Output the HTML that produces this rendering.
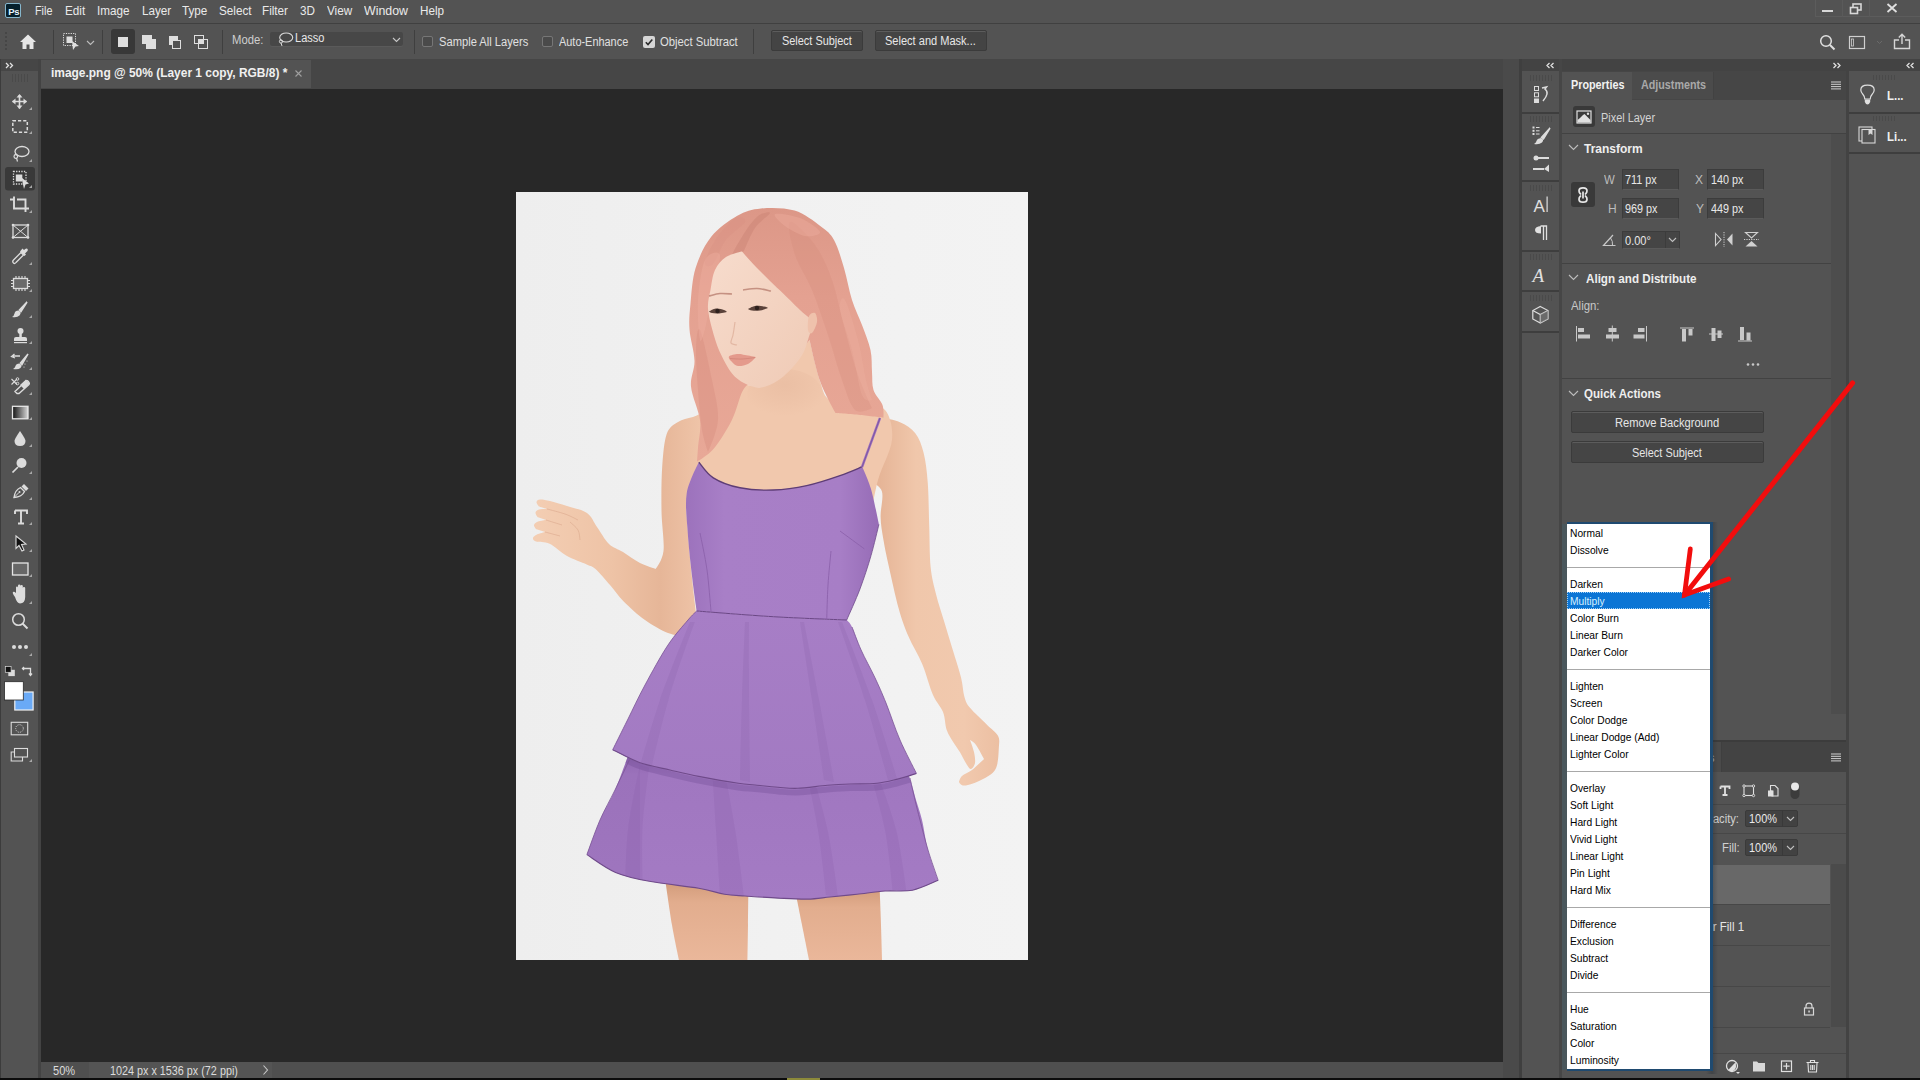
<!DOCTYPE html>
<html><head><meta charset="utf-8">
<style>
*{box-sizing:border-box}
html,body{margin:0;padding:0}
body{width:1920px;height:1080px;overflow:hidden;position:relative;background:#535353;font-family:"Liberation Sans",sans-serif;color:#e6e6e6}
.a{position:absolute}
.t{position:absolute;white-space:nowrap;transform-origin:0 50%;line-height:1}
.mi{position:absolute;top:3px;font-size:13px;color:#eaeaea;white-space:nowrap;line-height:15px;transform-origin:0 50%}
.ob{font-size:12px;color:#e0e0e0}
.cb{position:absolute;width:11px;height:11px;border:1px solid #767676;border-radius:2px;background:#4a4a4a}
.btn{position:absolute;background:#444;border:1px solid #3b3b3b;border-radius:2px;box-shadow:0 1px 0 #5c5c5c inset}
.sep{position:absolute;width:1px;background:#3f3f3f}
.ico{position:absolute;overflow:visible}
.grip{position:absolute;height:8px;background:repeating-linear-gradient(90deg,#4b4b4b 0 1px,transparent 1px 3px)}
.dd div{position:absolute;left:4px;font-size:12px;color:#1a1a1a;white-space:nowrap;transform:scaleX(.9);transform-origin:0 50%;line-height:14px}
.ddi{position:absolute;left:3px;margin-top:.8px;font-size:11px;line-height:17px;height:17px;color:#000;white-space:nowrap;transform:scaleX(.93);transform-origin:0 50%}
</style></head>
<body>
<!-- window border left -->
<!-- MENU BAR -->
<div class="a" style="left:0;top:0;width:1920px;height:23px;background:#535353"></div>
<div class="a" style="left:0;top:23px;width:1920px;height:1px;background:#404040"></div>
<!-- Ps logo -->
<div class="a" style="left:5px;top:3px;width:16px;height:15px;background:#06202c;border:1px solid #86b6cc;border-radius:2px"></div>
<div class="a" style="left:8.3px;top:5.8px;font-size:9.5px;font-weight:700;color:#e8f6ff;line-height:11px;letter-spacing:-.4px">Ps</div>
<div class="mi" style="left:35px;transform:scaleX(.83)">File</div>
<div class="mi" style="left:65px;transform:scaleX(.9)">Edit</div>
<div class="mi" style="left:97px;transform:scaleX(.9)">Image</div>
<div class="mi" style="left:142px;transform:scaleX(.9)">Layer</div>
<div class="mi" style="left:182px;transform:scaleX(.9)">Type</div>
<div class="mi" style="left:219px;transform:scaleX(.9)">Select</div>
<div class="mi" style="left:262px;transform:scaleX(.9)">Filter</div>
<div class="mi" style="left:300px;transform:scaleX(.9)">3D</div>
<div class="mi" style="left:327px;transform:scaleX(.9)">View</div>
<div class="mi" style="left:364px;transform:scaleX(.95)">Window</div>
<div class="mi" style="left:420px;transform:scaleX(.9)">Help</div>

<!-- OPTIONS BAR -->
<div class="a" style="left:0;top:24px;width:1920px;height:35px;background:#535353"></div>


<!-- OPTIONS BAR CONTENT -->
<div class="grip" style="left:5px;top:32px;width:2px;height:19px;background:repeating-linear-gradient(180deg,#464646 0 2px,transparent 2px 4px)"></div>
<svg class="ico" style="left:19px;top:33px" width="18" height="17" viewBox="0 0 18 17"><path d="M9,1.5 L17,9 L14.5,9 L14.5,16 L10.5,16 L10.5,11.5 L7.5,11.5 L7.5,16 L3.5,16 L3.5,9 L1,9 Z" fill="#e6e6e6"/></svg>
<div class="sep" style="left:53px;top:30px;height:24px"></div>
<svg class="ico" style="left:62px;top:32px" width="20" height="19" viewBox="0 0 20 19"><rect x="1.5" y="1.5" width="12" height="12" fill="none" stroke="#e0e0e0" stroke-width="1" stroke-dasharray="1.2 1.2"/><rect x="4.5" y="4.5" width="6" height="6.5" fill="#e0e0e0"/><path d="M10,9 L17,14 L13.5,14.5 L11,18 Z" fill="#e0e0e0"/></svg>
<svg class="ico" style="left:86px;top:40px" width="9" height="6" viewBox="0 0 9 6"><path d="M1,1 L4.5,4.5 L8,1" fill="none" stroke="#bdbdbd" stroke-width="1.1"/></svg>
<div class="sep" style="left:102px;top:30px;height:24px"></div>
<div class="a" style="left:111px;top:29px;width:24px;height:25px;background:#383838;border-radius:3px"></div>
<div class="a" style="left:118px;top:37px;width:10px;height:10px;background:#dedede"></div>
<div class="a" style="left:142px;top:35px;width:10px;height:9px;background:#dedede"></div>
<div class="a" style="left:146px;top:39px;width:10px;height:10px;background:#dedede"></div>
<div class="a" style="left:169px;top:36px;width:9px;height:9px;background:#dedede"></div>
<div class="a" style="left:172px;top:40px;width:9px;height:9px;border:1.2px solid #dedede;background:#535353"></div>
<div class="a" style="left:194px;top:35px;width:10px;height:9px;border:1.2px solid #dedede"></div>
<div class="a" style="left:198px;top:39px;width:10px;height:10px;border:1.2px solid #dedede"></div>
<div class="a" style="left:198px;top:39px;width:6px;height:5px;background:#dedede"></div>
<div class="sep" style="left:222px;top:30px;height:24px"></div>
<div class="t ob" style="left:232px;top:34px;font-size:12px;transform:scaleX(.94);color:#cfcfcf">Mode:</div>
<div class="a" style="left:270px;top:32px;width:133px;height:14px;background:#474747;border-radius:2px;box-shadow:0 1px 0 #5a5a5a"></div>
<svg class="ico" style="left:277px;top:32px" width="17" height="15" viewBox="0 0 17 15"><ellipse cx="9.2" cy="5.5" rx="6.5" ry="4.5" fill="none" stroke="#dcdcdc" stroke-width="1.1"/><circle cx="4" cy="9.5" r="1.6" fill="none" stroke="#dcdcdc" stroke-width="1"/><path d="M4,11 L5,14" stroke="#dcdcdc" stroke-width="1"/></svg>
<div class="t ob" style="left:295px;top:32px;font-size:12px;transform:scaleX(.92);color:#e8e8e8">Lasso</div>
<svg class="ico" style="left:392px;top:37px" width="9" height="6" viewBox="0 0 9 6"><path d="M1,1 L4.5,4.5 L8,1" fill="none" stroke="#c8c8c8" stroke-width="1.1"/></svg>
<div class="sep" style="left:414px;top:30px;height:24px"></div>
<div class="cb" style="left:422px;top:36px"></div>
<div class="t ob" style="left:439px;top:36px;font-size:12px;transform:scaleX(.93)">Sample All Layers</div>
<div class="cb" style="left:542px;top:36px"></div>
<div class="t ob" style="left:559px;top:36px;font-size:12px;transform:scaleX(.91)">Auto-Enhance</div>
<div class="a" style="left:643px;top:36px;width:12px;height:12px;background:#d6d6d6;border-radius:2px"></div>
<svg class="ico" style="left:643px;top:36px" width="12" height="12" viewBox="0 0 12 12"><path d="M2.8,6.2 L5,8.5 L9.3,3.5" fill="none" stroke="#2b2b2b" stroke-width="1.6"/></svg>
<div class="t ob" style="left:660px;top:36px;font-size:12px;transform:scaleX(.94)">Object Subtract</div>
<div class="sep" style="left:753px;top:29px;height:25px"></div>
<div class="btn" style="left:771px;top:30px;width:92px;height:21px"></div>
<div class="t ob" style="left:782px;top:35px;font-size:12px;transform:scaleX(.91);color:#e8e8e8">Select Subject</div>
<div class="btn" style="left:875px;top:30px;width:112px;height:21px"></div>
<div class="t ob" style="left:885px;top:35px;font-size:12px;transform:scaleX(.92);color:#e8e8e8">Select and Mask...</div>
<!-- right side of options bar -->
<svg class="ico" style="left:1819px;top:34px" width="17" height="17" viewBox="0 0 17 17"><circle cx="7" cy="7" r="5.3" fill="none" stroke="#e0e0e0" stroke-width="1.5"/><path d="M11,11 L15.5,15.5" stroke="#e0e0e0" stroke-width="2"/></svg>
<svg class="ico" style="left:1848px;top:35px" width="18" height="15" viewBox="0 0 18 15"><rect x="1.5" y="1.5" width="15" height="12" fill="none" stroke="#cfcfcf" stroke-width="1.2"/><rect x="3.5" y="4" width="2" height="7" fill="none" stroke="#cfcfcf" stroke-width=".8"/></svg>
<svg class="ico" style="left:1876px;top:40px" width="7" height="5" viewBox="0 0 7 5"><path d="M1,1 L3.5,3.5 L6,1" fill="none" stroke="#6a6a6a" stroke-width="1"/></svg>
<svg class="ico" style="left:1893px;top:33px" width="18" height="17" viewBox="0 0 18 17"><path d="M6,7 L1.5,7 L1.5,15.5 L16.5,15.5 L16.5,7 L12,7" fill="none" stroke="#d6d6d6" stroke-width="1.4"/><path d="M9,11 L9,1.5 M5.8,4.5 L9,1.3 L12.2,4.5" fill="none" stroke="#d6d6d6" stroke-width="1.4"/></svg>
<!-- window controls -->
<div class="a" style="left:1815px;top:0;width:105px;height:17px;border-left:1px solid #5c5c5c;border-bottom:1px solid #5c5c5c"></div>
<div class="a" style="left:1842px;top:0;width:1px;height:17px;background:#5a5a5a"></div>
<div class="a" style="left:1869px;top:0;width:1px;height:17px;background:#5a5a5a"></div>
<div class="a" style="left:1822px;top:10px;width:11px;height:2px;background:#d8d8d8"></div>
<svg class="ico" style="left:1849px;top:3px" width="14" height="12" viewBox="0 0 14 12"><rect x="4" y="1" width="8" height="6" fill="none" stroke="#d8d8d8" stroke-width="1.6"/><rect x="1.5" y="4.5" width="7" height="6" fill="#535353" stroke="#d8d8d8" stroke-width="1.6"/></svg>
<svg class="ico" style="left:1886px;top:3px" width="12" height="10" viewBox="0 0 12 10"><path d="M1.5,1 L10.5,9 M10.5,1 L1.5,9" stroke="#e0e0e0" stroke-width="1.8"/></svg>

<!-- LEFT TOOLBAR -->
<div class="a" style="left:0;top:59px;width:38px;height:1019px;background:#535353"></div>
<div class="a" style="left:0;top:59px;width:38px;height:12px;background:#464646"></div>
<div class="a" style="left:0;top:59px;width:1px;height:1019px;background:#3c3c3c"></div>
<div class="a" style="left:38px;top:59px;width:3px;height:1019px;background:#434343"></div>
<!-- TAB BAR -->
<div class="a" style="left:41px;top:59px;width:1462px;height:30px;background:#464646"></div>
<div class="a" style="left:41px;top:60px;width:270px;height:28px;background:#535353"></div>
<!-- tab -->
<div class="t" style="left:51px;top:67px;font-size:12px;font-weight:700;color:#f0f0f0;transform:scaleX(.995)">image.png @ 50% (Layer 1 copy, RGB/8) *</div>
<svg class="ico" style="left:294px;top:69px" width="9" height="9" viewBox="0 0 9 9"><path d="M1.5,1.5 L7.5,7.5 M7.5,1.5 L1.5,7.5" stroke="#a0a0a0" stroke-width="1.1"/></svg>
<svg class="ico" style="left:5px;top:62px" width="9" height="7" viewBox="0 0 9 7"><path d="M1,1 L3.5,3.5 L1,6 M5,1 L7.5,3.5 L5,6" fill="none" stroke="#e0e0e0" stroke-width="1.3"/></svg>
<!-- CANVAS -->
<div class="a" style="left:41px;top:89px;width:1462px;height:973px;background:#282828"></div>
<!-- STATUS BAR -->
<div class="a" style="left:41px;top:1062px;width:1462px;height:16px;background:#4f4f4f"></div>
<div class="a" style="left:0;top:1078px;width:1920px;height:2px;background:#0c0c0c"></div>
<!-- canvas vscroll strip -->
<div class="a" style="left:1503px;top:59px;width:16px;height:1019px;background:#4a4a4a"></div>
<div class="a" style="left:1519px;top:59px;width:3px;height:1019px;background:#3f3f3f"></div>
<!-- PANEL ICON COLUMN -->
<div class="a" style="left:1522px;top:59px;width:37px;height:1019px;background:#535353"></div>
<div class="a" style="left:1522px;top:59px;width:37px;height:12px;background:#434343"></div>
<div class="a" style="left:1559px;top:59px;width:3px;height:1019px;background:#464646"></div>
<!-- PROPERTIES PANEL -->
<div class="a" style="left:1562px;top:59px;width:284px;height:1019px;background:#535353"></div>
<div class="a" style="left:1562px;top:59px;width:284px;height:12px;background:#434343"></div>
<div class="a" style="left:1846px;top:59px;width:3px;height:1019px;background:#434343"></div>
<!-- FAR RIGHT PANEL -->
<div class="a" style="left:1849px;top:59px;width:71px;height:1019px;background:#535353"></div>
<div class="a" style="left:1849px;top:59px;width:71px;height:12px;background:#434343"></div>


<!-- PANEL COLUMN CONTENT -->
<svg class="ico" style="left:1545px;top:62px" width="10" height="7" viewBox="0 0 10 7"><path d="M4.5,1 L2,3.5 L4.5,6 M8.5,1 L6,3.5 L8.5,6" fill="none" stroke="#e0e0e0" stroke-width="1.3"/></svg>
<div class="a" style="left:1522px;top:112px;width:37px;height:2px;background:#3e3e3e"></div>
<div class="a" style="left:1522px;top:180px;width:37px;height:2px;background:#3e3e3e"></div>
<div class="a" style="left:1522px;top:250px;width:37px;height:2px;background:#3e3e3e"></div>
<div class="a" style="left:1522px;top:290px;width:37px;height:2px;background:#3e3e3e"></div>
<div class="a" style="left:1522px;top:331px;width:37px;height:2px;background:#3e3e3e"></div>
<div class="grip" style="left:1530px;top:75px;width:22px;height:6px;background:repeating-linear-gradient(90deg,#4a4a4a 0 1px,transparent 1px 3px)"></div>
<div class="grip" style="left:1530px;top:116px;width:22px;height:6px;background:repeating-linear-gradient(90deg,#4a4a4a 0 1px,transparent 1px 3px)"></div>
<div class="grip" style="left:1530px;top:185px;width:22px;height:6px;background:repeating-linear-gradient(90deg,#4a4a4a 0 1px,transparent 1px 3px)"></div>
<div class="grip" style="left:1530px;top:254px;width:22px;height:6px;background:repeating-linear-gradient(90deg,#4a4a4a 0 1px,transparent 1px 3px)"></div>
<div class="grip" style="left:1530px;top:295px;width:22px;height:6px;background:repeating-linear-gradient(90deg,#4a4a4a 0 1px,transparent 1px 3px)"></div>
<svg class="a" style="left:1522px;top:60px" width="40" height="280" viewBox="1522 60 40 280">
<rect x="1534.5" y="86.5" width="4" height="4" fill="none" stroke="#dcdcdc" stroke-width="1"/>
<rect x="1534.5" y="92.8" width="4" height="4" fill="none" stroke="#dcdcdc" stroke-width="1"/>
<rect x="1534" y="98.5" width="5" height="4.5" fill="#dcdcdc"/>
<path d="M1542,88 L1546.5,87 L1545,89 Q1550,93 1543,101" fill="none" stroke="#dcdcdc" stroke-width="1.5"/>
<rect x="1532.5" y="126.5" width="2" height="2" fill="#dcdcdc"/><rect x="1532.5" y="129.8" width="2" height="2" fill="#dcdcdc"/><rect x="1532.5" y="133" width="2" height="2" fill="#dcdcdc"/>
<path d="M1536,127.5 L1539.5,127.5 M1536,130.8 L1539.5,130.8 M1536,134 L1539.5,134" stroke="#dcdcdc" stroke-width="1"/>
<path d="M1550,128 L1541.5,137.5 L1543.5,139 Z" fill="#dcdcdc" stroke="#dcdcdc" stroke-width="1.5"/><path d="M1541,138 Q1537,138.5 1536.5,141 Q1536,143 1534,144 Q1539,145 1542,142.5 Q1543.5,141 1543,139.5 Z" fill="#dcdcdc"/>
<circle cx="1536" cy="158" r="2.5" fill="#dcdcdc"/><path d="M1538,158 L1549,158 M1533,169 L1544,169" stroke="#dcdcdc" stroke-width="1.8"/><path d="M1544,169 L1549,164.5 L1549,172 Z" fill="#dcdcdc"/>
<text x="1533.5" y="211.5" font-family="Liberation Sans" font-size="17" fill="#e0e0e0">A</text><rect x="1546.5" y="196.5" width="1.2" height="15.5" fill="#e0e0e0"/>
<path d="M1540.5,226 L1546.5,226 L1546.5,240 M1543.5,226 L1543.5,240" fill="none" stroke="#e0e0e0" stroke-width="1.3"/><path d="M1541,226 Q1535,226.5 1535,230 Q1535,233.5 1541,233.5 Z" fill="#e0e0e0"/>
<text x="1532.5" y="281.5" font-family="Liberation Serif" font-style="italic" font-size="19" fill="#e0e0e0">A</text>
<path d="M1540.3,306.5 L1548,310.5 L1548,319 L1540.3,323 L1532.8,319 L1532.8,310.5 Z" fill="none" stroke="#dcdcdc" stroke-width="1.2"/><path d="M1532.8,310.5 L1540.3,314.5 L1548,310.5 M1540.3,314.5 L1540.3,323" fill="none" stroke="#dcdcdc" stroke-width="1.2"/><path d="M1540.3,314.5 L1548,310.5 L1548,319 L1540.3,323 Z" fill="#7a7a7a" opacity=".6"/>
</svg>

<!-- PROPERTIES PANEL CONTENT -->
<svg class="ico" style="left:1832px;top:62px" width="10" height="7" viewBox="0 0 10 7"><path d="M1.5,1 L4,3.5 L1.5,6 M5.5,1 L8,3.5 L5.5,6" fill="none" stroke="#e0e0e0" stroke-width="1.3"/></svg>
<div class="a" style="left:1562px;top:71px;width:284px;height:29px;background:#464646"></div>
<div class="a" style="left:1562px;top:72px;width:70px;height:28px;background:#535353"></div>
<div class="a" style="left:1632px;top:72px;width:82px;height:27px;background:#4b4b4b;border-right:1px solid #424242"></div>
<div class="t" style="left:1571px;top:79px;font-size:12px;font-weight:700;color:#f2f2f2;transform:scaleX(.9)">Properties</div>
<div class="t" style="left:1641px;top:79px;font-size:12px;font-weight:700;color:#a9a9a9;transform:scaleX(.895)">Adjustments</div>
<svg class="ico" style="left:1830px;top:81px" width="12" height="9" viewBox="0 0 12 9"><path d="M1,1 L11,1 M1,3.3 L11,3.3 M1,5.6 L11,5.6 M1,7.9 L11,7.9" stroke="#d0d0d0" stroke-width="1"/></svg>
<!-- pixel layer -->
<div class="a" style="left:1573px;top:106px;width:22px;height:21px;background:#393939;border-radius:3px"></div>
<svg class="ico" style="left:1576px;top:110px" width="16" height="14" viewBox="0 0 16 14"><rect x="1" y="1" width="14" height="12" fill="#3a3a3a" stroke="#e0e0e0" stroke-width="1.2"/><path d="M1.5,12.5 L1.5,10 L4,8 L5.5,6.5 L7,5 L8.5,4 L10,5.5 L11.5,7 L13,8.5 L14.5,10 L14.5,12.5 Z" fill="#e0e0e0"/><circle cx="12" cy="3.8" r="1.2" fill="#e0e0e0"/></svg>
<div class="t" style="left:1601px;top:112px;font-size:12px;color:#d4d4d4;transform:scaleX(.91)">Pixel Layer</div>
<div class="a" style="left:1562px;top:133px;width:284px;height:1px;background:#424242"></div>
<div class="a" style="left:1831px;top:134px;width:15px;height:580px;background:#4d4d4d"></div>
<!-- transform -->
<svg class="ico" style="left:1568px;top:144px" width="11" height="7" viewBox="0 0 11 7"><path d="M1,1 L5.5,5.5 L10,1" fill="none" stroke="#bdbdbd" stroke-width="1.1"/></svg>
<div class="t" style="left:1584px;top:142.5px;font-size:12px;font-weight:700;color:#eeeeee">Transform</div>
<div class="a" style="left:1571px;top:182px;width:24px;height:25px;background:#393939;border-radius:3px"></div>
<svg class="ico" style="left:1577px;top:186px" width="12" height="18" viewBox="0 0 12 18"><path d="M4,8.5 L3.2,7.7 Q2,6.5 2,4.8 Q2,1.8 6,1.8 Q10,1.8 10,4.8 Q10,6.5 8.8,7.7 L8,8.5" fill="none" stroke="#e8e8e8" stroke-width="1.7"/><path d="M4,9.5 L3.2,10.3 Q2,11.5 2,13.2 Q2,16.2 6,16.2 Q10,16.2 10,13.2 Q10,11.5 8.8,10.3 L8,9.5" fill="none" stroke="#e8e8e8" stroke-width="1.7"/><path d="M6,5.5 L6,12.5" stroke="#e8e8e8" stroke-width="1.7"/></svg>
<div class="t" style="left:1604px;top:173.5px;font-size:12px;color:#bdbdbd;transform:scaleX(.95)">W</div>
<div class="t" style="left:1608px;top:203px;font-size:12px;color:#bdbdbd">H</div>
<div class="t" style="left:1695px;top:173.5px;font-size:12px;color:#bdbdbd">X</div>
<div class="t" style="left:1696px;top:203px;font-size:12px;color:#bdbdbd">Y</div>
<div class="a" style="left:1622px;top:169px;width:57px;height:21px;background:#454545;border:1px solid #3c3c3c;border-bottom-color:#5a5a5a"></div>
<div class="a" style="left:1707px;top:169px;width:57px;height:21px;background:#454545;border:1px solid #3c3c3c;border-bottom-color:#5a5a5a"></div>
<div class="a" style="left:1622px;top:198px;width:57px;height:21px;background:#454545;border:1px solid #3c3c3c;border-bottom-color:#5a5a5a"></div>
<div class="a" style="left:1707px;top:198px;width:57px;height:21px;background:#454545;border:1px solid #3c3c3c;border-bottom-color:#5a5a5a"></div>
<div class="t" style="left:1625px;top:174px;font-size:12px;color:#e8e8e8;transform:scaleX(.9)">711 px</div>
<div class="t" style="left:1711px;top:174px;font-size:12px;color:#e8e8e8;transform:scaleX(.9)">140 px</div>
<div class="t" style="left:1625px;top:203px;font-size:12px;color:#e8e8e8;transform:scaleX(.9)">969 px</div>
<div class="t" style="left:1711px;top:203px;font-size:12px;color:#e8e8e8;transform:scaleX(.9)">449 px</div>
<svg class="ico" style="left:1602px;top:232px" width="15" height="15" viewBox="0 0 15 15"><path d="M13.5,13.5 L1.5,13.5 L11,3" fill="none" stroke="#c8c8c8" stroke-width="1.2"/><path d="M8.5,6 Q11,9 10.5,13.5" fill="none" stroke="#c8c8c8" stroke-width="1"/></svg>
<div class="a" style="left:1622px;top:231px;width:58px;height:18px;background:#454545;border:1px solid #3c3c3c;border-bottom-color:#5a5a5a"></div>
<div class="a" style="left:1665px;top:232px;width:1px;height:16px;background:#3c3c3c"></div>
<div class="t" style="left:1625px;top:234.5px;font-size:12px;color:#e8e8e8;transform:scaleX(.92)">0.00°</div>
<svg class="ico" style="left:1668px;top:237px" width="9" height="6" viewBox="0 0 9 6"><path d="M1,1 L4.5,4.5 L8,1" fill="none" stroke="#c0c0c0" stroke-width="1.1"/></svg>
<svg class="ico" style="left:1714px;top:231px" width="20" height="17" viewBox="0 0 20 17"><path d="M1.5,2.5 L7,8.5 L1.5,14.5 Z" fill="none" stroke="#d0d0d0" stroke-width="1.1"/><path d="M18.5,2.5 L13,8.5 L18.5,14.5 Z" fill="#d0d0d0"/><path d="M10,1 L10,16" stroke="#d0d0d0" stroke-width="1" stroke-dasharray="1.2 1.2"/></svg>
<svg class="ico" style="left:1743px;top:231px" width="17" height="17" viewBox="0 0 17 17"><path d="M2.5,1.5 L8.5,7 L14.5,1.5 Z" fill="none" stroke="#d0d0d0" stroke-width="1.1"/><path d="M2.5,15.5 L8.5,10 L14.5,15.5 Z" fill="#d0d0d0"/><path d="M1,8.5 L16,8.5" stroke="#d0d0d0" stroke-width="1" stroke-dasharray="1.2 1.2"/></svg>
<div class="a" style="left:1562px;top:263px;width:269px;height:1px;background:#424242"></div>
<!-- align -->
<svg class="ico" style="left:1568px;top:274px" width="11" height="7" viewBox="0 0 11 7"><path d="M1,1 L5.5,5.5 L10,1" fill="none" stroke="#bdbdbd" stroke-width="1.1"/></svg>
<div class="t" style="left:1586px;top:272.5px;font-size:12px;font-weight:700;color:#eeeeee;transform:scaleX(.97)">Align and Distribute</div>
<div class="t" style="left:1571px;top:299.8px;font-size:12px;color:#c8c8c8;transform:scaleX(.95)">Align:</div>
<svg class="a" style="left:1570px;top:320px" width="190" height="50" viewBox="1570 320 190 50">
<g fill="#c8c8c8">
<rect x="1576" y="326" width="1" height="15.5"/><rect x="1578" y="328" width="6" height="4"/><rect x="1578" y="334.5" width="12" height="4"/>
<rect x="1611.8" y="325.5" width="1" height="16"/><rect x="1608.5" y="328" width="8" height="4"/><rect x="1606" y="334.5" width="13" height="4"/>
<rect x="1646" y="326" width="1" height="15.5"/><rect x="1638" y="328" width="6.5" height="4"/><rect x="1633.5" y="334.5" width="11" height="4"/>
<rect x="1680" y="327.5" width="14" height="1"/><rect x="1682" y="329" width="4" height="12.5"/><rect x="1688.5" y="329" width="4" height="6.5"/>
<rect x="1709" y="333.5" width="14" height="1"/><rect x="1711.5" y="328" width="4" height="13"/><rect x="1717.5" y="330.5" width="4" height="7.5"/>
<rect x="1738" y="340.5" width="14" height="1"/><rect x="1740" y="327" width="4" height="13"/><rect x="1746.5" y="332.5" width="4" height="8"/>
<circle cx="1748" cy="364.5" r="1.3"/><circle cx="1753" cy="364.5" r="1.3"/><circle cx="1758" cy="364.5" r="1.3"/>
</g></svg>
<div class="a" style="left:1562px;top:378px;width:269px;height:1px;background:#424242"></div>
<!-- quick actions -->
<svg class="ico" style="left:1568px;top:390px" width="11" height="7" viewBox="0 0 11 7"><path d="M1,1 L5.5,5.5 L10,1" fill="none" stroke="#bdbdbd" stroke-width="1.1"/></svg>
<div class="t" style="left:1584px;top:388px;font-size:12px;font-weight:700;color:#eeeeee;transform:scaleX(.96)">Quick Actions</div>
<div class="btn" style="left:1571px;top:411px;width:193px;height:22px;background:#454545"></div>
<div class="btn" style="left:1571px;top:441px;width:193px;height:22px;background:#454545"></div>
<div class="t" style="left:1615px;top:417px;font-size:12px;color:#e6e6e6;transform:scaleX(.93)">Remove Background</div>
<div class="t" style="left:1632px;top:446.8px;font-size:12px;color:#e6e6e6;transform:scaleX(.91)">Select Subject</div>
<div class="a" style="left:1562px;top:740px;width:284px;height:2px;background:#3c3c3c"></div>

<!-- LAYERS PANEL -->
<div class="a" style="left:1562px;top:742px;width:284px;height:30px;background:#434343"></div>
<div class="a" style="left:1562px;top:742px;width:160px;height:30px;background:#4a4a4a;border-right:1px solid #3f3f3f"></div>
<div class="t" style="left:1708px;top:752px;font-size:12px;font-weight:700;color:#9aa4ae">s</div>
<svg class="ico" style="left:1830px;top:753px" width="12" height="9" viewBox="0 0 12 9"><path d="M1,1 L11,1 M1,3.3 L11,3.3 M1,5.6 L11,5.6 M1,7.9 L11,7.9" stroke="#d0d0d0" stroke-width="1"/></svg>
<svg class="a" style="left:1712px;top:778px" width="100" height="26" viewBox="1712 778 100 26">
<path d="M1720.5,786.5 L1729.5,786.5 L1729.5,789 M1720.5,786.5 L1720.5,789 M1725,786.5 L1725,795 M1722.5,795 L1727.5,795" fill="none" stroke="#e0e0e0" stroke-width="1.8"/>
<rect x="1744" y="786" width="9.5" height="9.5" fill="none" stroke="#e0e0e0" stroke-width="1.1"/><circle cx="1744" cy="786" r="1.2" fill="#535353" stroke="#e0e0e0" stroke-width=".9"/><circle cx="1753.5" cy="786" r="1.2" fill="#535353" stroke="#e0e0e0" stroke-width=".9"/><circle cx="1744" cy="795.5" r="1.2" fill="#535353" stroke="#e0e0e0" stroke-width=".9"/><circle cx="1753.5" cy="795.5" r="1.2" fill="#535353" stroke="#e0e0e0" stroke-width=".9"/>
<path d="M1770.5,785.5 L1775,785.5 L1778,788.5 L1778,796 L1772,796 L1772,791 L1770.5,791 Z" fill="none" stroke="#e0e0e0" stroke-width="1.1"/><rect x="1768" y="790.5" width="5.5" height="6" fill="#e0e0e0"/>
<rect x="1790.5" y="783" width="9" height="16" rx="4.5" fill="#3c3c3c"/><circle cx="1795" cy="786.5" r="4" fill="#e8e8e8"/>
</svg>
<div class="a" style="left:1562px;top:804px;width:284px;height:1px;background:#474747"></div>
<div class="a" style="left:1562px;top:833px;width:284px;height:1px;background:#474747"></div>
<div class="t" style="left:1698px;top:813px;font-size:12px;color:#d0d0d0;transform:scaleX(.93)">Opacity:</div>
<div class="t" style="left:1722px;top:842px;font-size:12px;color:#d0d0d0;transform:scaleX(.95)">Fill:</div>
<div class="a" style="left:1745px;top:810px;width:53px;height:17px;background:#424242;border:1px solid #3a3a3a;border-radius:2px"></div>
<div class="a" style="left:1782px;top:810px;width:1px;height:17px;background:#393939"></div>
<div class="t" style="left:1748.5px;top:813px;font-size:12px;color:#eaeaea;transform:scaleX(.91)">100%</div>
<svg class="ico" style="left:1786px;top:816px" width="9" height="6" viewBox="0 0 9 6"><path d="M1,1 L4.5,4.5 L8,1" fill="none" stroke="#c0c0c0" stroke-width="1.1"/></svg>
<div class="a" style="left:1745px;top:839px;width:53px;height:17px;background:#424242;border:1px solid #3a3a3a;border-radius:2px"></div>
<div class="a" style="left:1782px;top:839px;width:1px;height:17px;background:#393939"></div>
<div class="t" style="left:1748.5px;top:842px;font-size:12px;color:#eaeaea;transform:scaleX(.91)">100%</div>
<svg class="ico" style="left:1786px;top:845px" width="9" height="6" viewBox="0 0 9 6"><path d="M1,1 L4.5,4.5 L8,1" fill="none" stroke="#c0c0c0" stroke-width="1.1"/></svg>
<!-- layer rows -->
<div class="a" style="left:1831px;top:864px;width:15px;height:163px;background:#4b4b4b"></div>
<div class="a" style="left:1567px;top:865px;width:263px;height:39px;background:#686868"></div>
<div class="a" style="left:1567px;top:904px;width:263px;height:1px;background:#474747"></div>
<div class="a" style="left:1567px;top:945px;width:263px;height:1px;background:#474747"></div>
<div class="a" style="left:1567px;top:986px;width:263px;height:1px;background:#474747"></div>
<div class="a" style="left:1567px;top:1027px;width:263px;height:1px;background:#474747"></div>
<div class="t" style="left:1689px;top:921px;font-size:12px;color:#e6e6e6;transform:scaleX(.96)">Color Fill 1</div>
<svg class="ico" style="left:1803px;top:1002px" width="12" height="14" viewBox="0 0 12 14"><path d="M3,6 L3,4 Q3,1.2 6,1.2 Q9,1.2 9,4 L9,6" fill="none" stroke="#d8d8d8" stroke-width="1.2"/><rect x="1.5" y="6" width="9" height="7" fill="none" stroke="#d8d8d8" stroke-width="1.2"/><rect x="5.3" y="8.5" width="1.5" height="2" fill="#d8d8d8"/></svg>
<div class="a" style="left:1562px;top:1053px;width:284px;height:1px;background:#474747"></div>
<svg class="a" style="left:1720px;top:1056px" width="110" height="20" viewBox="1720 1056 110 20">
<circle cx="1732" cy="1066" r="5.5" fill="none" stroke="#e0e0e0" stroke-width="1.3"/><path d="M1728.2,1070 L1735.8,1062 L1736,1067 Q1735,1071 1731,1071.5 Z" fill="#e0e0e0"/><path d="M1736,1072 L1740,1072 L1738,1074 Z" fill="#e0e0e0"/>
<path d="M1753,1061.5 L1757,1061.5 L1758.5,1063 L1765,1063 L1765,1071.5 L1753,1071.5 Z" fill="#d8d8d8"/>
<rect x="1781.5" y="1061" width="10" height="10.5" fill="none" stroke="#e0e0e0" stroke-width="1.2"/><path d="M1786.5,1063 L1786.5,1069.5 M1783.3,1066.2 L1789.7,1066.2" stroke="#e0e0e0" stroke-width="1.2"/>
<path d="M1806.5,1062.5 L1818.5,1062.5 M1810.5,1062.5 L1810.5,1060.5 L1814.5,1060.5 L1814.5,1062.5 M1808,1063 L1808.5,1072 L1816.5,1072 L1817,1063 M1810.8,1065 L1810.8,1070 M1812.5,1065 L1812.5,1070 M1814.2,1065 L1814.2,1070" fill="none" stroke="#e0e0e0" stroke-width="1.1"/>
</svg>

<!-- FAR RIGHT PANEL CONTENT -->
<svg class="ico" style="left:1905px;top:62px" width="10" height="7" viewBox="0 0 10 7"><path d="M4.5,1 L2,3.5 L4.5,6 M8.5,1 L6,3.5 L8.5,6" fill="none" stroke="#e0e0e0" stroke-width="1.3"/></svg>
<div class="a" style="left:1849px;top:112px;width:71px;height:2px;background:#3e3e3e"></div>
<div class="a" style="left:1849px;top:152px;width:71px;height:2px;background:#3e3e3e"></div>
<div class="grip" style="left:1873px;top:75px;width:22px;height:5px;background:repeating-linear-gradient(90deg,#4a4a4a 0 1px,transparent 1px 3px)"></div>
<div class="grip" style="left:1873px;top:116px;width:22px;height:5px;background:repeating-linear-gradient(90deg,#4a4a4a 0 1px,transparent 1px 3px)"></div>
<svg class="ico" style="left:1859px;top:84px" width="17" height="22" viewBox="0 0 17 22"><path d="M5.8,15 Q5.8,12.5 4,10.5 Q1.8,8.2 1.8,6 Q1.8,1.2 8.5,1.2 Q15.2,1.2 15.2,6 Q15.2,8.2 13,10.5 Q11.2,12.5 11.2,15 Z" fill="none" stroke="#e0e0e0" stroke-width="1.2"/><path d="M5.8,15.5 L11.2,15.5 L11.2,18 Q10,20.5 8.5,20.5 Q7,20.5 5.8,18 Z" fill="#e0e0e0"/></svg>
<div class="t" style="left:1887px;top:90px;font-size:12px;font-weight:700;color:#f0f0f0;transform:scaleX(.95)">L...</div>
<svg class="ico" style="left:1858px;top:126px" width="19" height="18" viewBox="0 0 19 18"><rect x="1" y="1" width="13" height="14" fill="none" stroke="#d8d8d8" stroke-width="1.1"/><rect x="4" y="3.5" width="13" height="13.5" fill="#535353" stroke="#d8d8d8" stroke-width="1.1"/><path d="M10.5,3.5 L14.5,3.5 L14.5,9 L12.5,7.5 L10.5,9 Z" fill="#d8d8d8"/></svg>
<div class="t" style="left:1887px;top:130.5px;font-size:12px;font-weight:700;color:#f0f0f0;transform:scaleX(.95)">Li...</div>

<!-- TOOLBAR ICONS -->
<svg class="a" style="left:0;top:0" width="40" height="780" viewBox="0 0 40 780">
<defs><linearGradient id="grad1" x1="0" y1="0" x2="1" y2="0"><stop offset="0" stop-color="#111"/><stop offset="1" stop-color="#d8d8d8"/></linearGradient>
<pattern id="gripv" width="3" height="8" patternUnits="userSpaceOnUse"><rect width="1" height="8" fill="#4a4a4a"/></pattern></defs>
<rect x="10" y="74" width="20" height="8" fill="url(#gripv)"/>
<path d="M19.5,95 L19.5,108.5 M12.5,101.5 L26.5,101.5" stroke="#dcdcdc" stroke-width="1.6"/><path d="M19.5,94 L16.5,97.5 L22.5,97.5 Z M19.5,109 L16.5,105.5 L22.5,105.5 Z M12,101.5 L15.5,98.5 L15.5,104.5 Z M27,101.5 L23.5,98.5 L23.5,104.5 Z" fill="#dcdcdc"/><path d="M32,110 L32,107 L29,110 Z" fill="#a8a8a8"/>
<rect x="12.8" y="120.8" width="14.5" height="11.5" fill="none" stroke="#dcdcdc" stroke-width="1.5" stroke-dasharray="3.2 2"/><path d="M32,134 L32,131 L29,134 Z" fill="#a8a8a8"/>
<ellipse cx="22" cy="151.5" rx="7" ry="5" fill="none" stroke="#dcdcdc" stroke-width="1.3"/><circle cx="15.8" cy="156.5" r="1.8" fill="none" stroke="#dcdcdc" stroke-width="1.2"/><path d="M16.5,158 L17.5,161.5" stroke="#dcdcdc" stroke-width="1.2"/><path d="M32,162 L32,159 L29,162 Z" fill="#a8a8a8"/>
<rect x="5" y="167" width="30" height="23.5" rx="3" fill="#393939"/>
<rect x="13.5" y="171.5" width="12.5" height="12.5" fill="none" stroke="#dcdcdc" stroke-width="1.3" stroke-dasharray="1.3 1.3"/><rect x="15.8" y="174.5" width="6.5" height="7" fill="#dcdcdc"/><path d="M21.5,177.5 L29,183.5 L25.5,184.5 L24,189 Z" fill="#dcdcdc"/><path d="M32,188 L32,185 L29,188 Z" fill="#a8a8a8"/>
<path d="M10,199.5 L14,199.5 M14,196.5 L14,208.5 L25.5,208.5 M17,199.5 L25.5,199.5 L25.5,212 M25.5,208.5 L29,208.5" fill="none" stroke="#dcdcdc" stroke-width="1.9"/><path d="M32,213 L32,210 L29,213 Z" fill="#a8a8a8"/>
<rect x="13" y="225" width="15" height="12.5" fill="none" stroke="#dcdcdc" stroke-width="1.3"/><path d="M13,225 L28,237.5 M28,225 L13,237.5" stroke="#dcdcdc" stroke-width="1"/><circle cx="13" cy="225" r="1.3" fill="#dcdcdc"/><circle cx="28" cy="225" r="1.3" fill="#dcdcdc"/><circle cx="13" cy="237.5" r="1.3" fill="#dcdcdc"/><circle cx="28" cy="237.5" r="1.3" fill="#dcdcdc"/>
<path d="M13.5,263 Q12,261.5 13.5,260 L21,252.5 L23.5,255 L16,262.5 Q14.8,264.2 13.5,263 Z" fill="none" stroke="#dcdcdc" stroke-width="1.3"/><path d="M20,251.5 L24.5,256 L26,254.5 L25,253.5 L27.5,251 Q28.5,249 26.5,248.5 Q25.5,248.3 24,250 L22.5,248.5 Z" fill="#dcdcdc"/><path d="M32,265 L32,262 L29,265 Z" fill="#a8a8a8"/>
<rect x="13.5" y="278.5" width="14" height="10" fill="#6a6a6a" stroke="#dcdcdc" stroke-width="1.3"/><path d="M11,280.5 L13.5,280.5 M11,283.5 L13.5,283.5 M11,286.5 L13.5,286.5 M27.5,280.5 L30,280.5 M27.5,283.5 L30,283.5 M27.5,286.5 L30,286.5 M16,276 L16,278.5 M19,276 L19,278.5 M22,276 L22,278.5 M25,276 L25,278.5 M16,288.5 L16,291 M19,288.5 L19,291 M22,288.5 L22,291 M25,288.5 L25,291" stroke="#dcdcdc" stroke-width="1.1"/><path d="M32,292 L32,289 L29,292 Z" fill="#a8a8a8"/>
<path d="M27,302 L19.5,310 L21,311.5 Z" fill="#dcdcdc" stroke="#dcdcdc" stroke-width="1.6"/><path d="M18.5,310.5 Q15,310.5 14.5,313.5 Q14,316 12,317 Q17,318 19.5,315.5 Q21,313.5 20.5,312 Z" fill="#dcdcdc"/><path d="M32,318 L32,315 L29,318 Z" fill="#a8a8a8"/>
<circle cx="20.5" cy="331" r="3" fill="#dcdcdc"/><rect x="19.3" y="333" width="2.5" height="4" fill="#dcdcdc"/><path d="M14,341 L14,338.5 Q14,337 16,337 L25,337 Q27,337 27,338.5 L27,341 Z" fill="#dcdcdc"/><rect x="14" y="342" width="13" height="1.2" fill="#dcdcdc"/><path d="M32,344 L32,341 L29,344 Z" fill="#a8a8a8"/>
<path d="M28,354 L20.5,363 L22,364.5 Z" fill="#dcdcdc" stroke="#dcdcdc" stroke-width="1.5"/><path d="M19.5,363.5 Q16,363.5 15.5,366 Q15,368 13,369 Q18,370 20.5,368 Q22,366 21.5,365 Z" fill="#dcdcdc"/><path d="M20,356 L13,356 M14.5,354 L11.5,356.5 L15,358" fill="none" stroke="#dcdcdc" stroke-width="1.3"/><circle cx="25" cy="364" r=".6" fill="#dcdcdc"/><circle cx="27" cy="361" r=".6" fill="#dcdcdc"/><circle cx="24" cy="367" r=".6" fill="#dcdcdc"/><path d="M32,370 L32,367 L29,370 Z" fill="#a8a8a8"/>
<path d="M15,391.5 L26,381 Q27.5,380 28.5,381.5 L29,382.5 Q29.8,383.5 29,384.5 L19,393.5 L17,393.5 L14.5,391 Z" fill="none" stroke="#dcdcdc" stroke-width="1.3"/><path d="M20,385 L26,379.5 L30,383.5 L24,389 Z" fill="#dcdcdc"/><path d="M11.5,379 L17,384.5 M17,379 L11.5,384.5" stroke="#dcdcdc" stroke-width="1.1"/><circle cx="17.5" cy="379" r="1.3" fill="none" stroke="#dcdcdc" stroke-width=".9"/><circle cx="17.5" cy="383.5" r="1.3" fill="none" stroke="#dcdcdc" stroke-width=".9"/><path d="M32,395 L32,392 L29,395 Z" fill="#a8a8a8"/>
<rect x="12.5" y="406.3" width="15.5" height="12.5" fill="url(#grad1)" stroke="#e6e6e6" stroke-width="1.3"/><path d="M32,420 L32,417 L29,420 Z" fill="#a8a8a8"/>
<path d="M20,431 Q14.5,439 14.5,441 Q14.5,446 20,446 Q25.5,446 25.5,441 Q25.5,439 20,431 Z" fill="#dcdcdc"/><path d="M32,447 L32,444 L29,447 Z" fill="#a8a8a8"/>
<circle cx="21.5" cy="463" r="5" fill="#dcdcdc"/><path d="M18,467 L12.5,472.5" stroke="#dcdcdc" stroke-width="1.7"/><path d="M32,474 L32,471 L29,474 Z" fill="#a8a8a8"/>
<path d="M14,497.5 Q15,490 20.5,487.5 L24.5,491.5 Q22,497 14,497.5 Z" fill="none" stroke="#dcdcdc" stroke-width="1.3"/><path d="M14,497.5 L19,492.5" stroke="#dcdcdc" stroke-width="1"/><circle cx="19.5" cy="492" r="1" fill="#dcdcdc"/><path d="M21.5,486.5 L24,484 L28.5,488.5 L26,491 Z" fill="#dcdcdc"/><path d="M32,500 L32,497 L29,500 Z" fill="#a8a8a8"/>
<path d="M15,510.5 L27,510.5 L27,514 M15,510.5 L15,514 M21,510.5 L21,523.5 M18,523.5 L24,523.5" fill="none" stroke="#dcdcdc" stroke-width="1.9"/><path d="M32,525 L32,522 L29,525 Z" fill="#a8a8a8"/>
<path d="M16,536 L16,548.5 L19,545.5 L22,551 L24,550 L21.5,544.5 L26,544 Z" fill="#111" stroke="#dcdcdc" stroke-width="1.1"/><path d="M32,552 L32,549 L29,552 Z" fill="#a8a8a8"/>
<rect x="12.5" y="563" width="15.5" height="12" fill="#676767" stroke="#e6e6e6" stroke-width="1.3"/><path d="M32,577 L32,574 L29,577 Z" fill="#a8a8a8"/>
<path d="M15,597 Q12,593 13,592 Q14,591 16,593 L16,587.5 Q16,586.5 17,586.5 Q18,586.5 18,587.5 L18,585.5 Q18,584.5 19.2,584.5 Q20.4,584.5 20.4,585.5 L20.4,586 Q20.4,585 21.6,585 Q22.8,585 22.8,586 L22.8,588 Q22.8,587 24,587 Q25.2,587 25.2,588 L25.2,597 Q25,603.5 20,603.5 Q17,603.5 15,597 Z" fill="#dcdcdc"/><path d="M32,604 L32,601 L29,604 Z" fill="#a8a8a8"/>
<circle cx="18.5" cy="619.5" r="5.8" fill="none" stroke="#dcdcdc" stroke-width="1.5"/><path d="M22.5,623.5 L27.5,628.5" stroke="#dcdcdc" stroke-width="2"/>
<circle cx="14" cy="647" r="2" fill="#dcdcdc"/><circle cx="20" cy="647" r="2" fill="#dcdcdc"/><circle cx="26" cy="647" r="2" fill="#dcdcdc"/><path d="M32,656 L32,653 L29,656 Z" fill="#a8a8a8"/>
<rect x="8.3" y="669.8" width="6.5" height="6.3" fill="#dcdcdc"/><rect x="5.3" y="666.5" width="5.8" height="5.8" fill="#111" stroke="#dcdcdc" stroke-width=".7"/>
<path d="M24,667 L22.5,668.5 L24,670 M22.5,668.5 L30.5,668.5 L30.5,675 M29,673.5 L30.5,675.5 L32,673.5" fill="none" stroke="#dcdcdc" stroke-width="1.3"/>
<rect x="14.8" y="692" width="18.3" height="18" fill="#6aaaf6" stroke="#f0f0f0" stroke-width="1.2"/>
<rect x="4.5" y="681.7" width="18.8" height="18.3" fill="#ffffff" stroke="#2a2a2a" stroke-width=".8"/>
<rect x="11.2" y="722.3" width="16.5" height="12.5" fill="none" stroke="#dcdcdc" stroke-width="1.1"/><circle cx="19.5" cy="728.5" r="3.8" fill="none" stroke="#dcdcdc" stroke-width="1" stroke-dasharray="1 1.2"/>
<rect x="14.5" y="748.5" width="13" height="8.5" fill="none" stroke="#dcdcdc" stroke-width="1.1"/><path d="M14.5,752 L11.2,752 L11.2,761 L22.5,761 L22.5,757" fill="none" stroke="#dcdcdc" stroke-width="1.1"/><path d="M32,762 L32,759 L29,762 Z" fill="#a8a8a8"/>
</svg>
<!-- IMAGE -->
<svg class="a" style="left:516px;top:192px" width="512" height="768" viewBox="516 192 512 768">
<defs>
<linearGradient id="bgg" x1="0" y1="0" x2="1" y2="0"><stop offset="0" stop-color="#eeeeee"/><stop offset=".5" stop-color="#f1f1f1"/><stop offset="1" stop-color="#f3f3f3"/></linearGradient>
<linearGradient id="legg" x1="0" y1="0" x2="0" y2="1"><stop offset="0" stop-color="#cf9877"/><stop offset=".3" stop-color="#e2ad8e"/><stop offset="1" stop-color="#eab79a"/></linearGradient>
<linearGradient id="rarmg" gradientUnits="userSpaceOnUse" x1="880" y1="0" x2="1000" y2="0"><stop offset="0" stop-color="#e6b597"/><stop offset=".3" stop-color="#f0c7ab"/><stop offset=".7" stop-color="#f1c9ae"/><stop offset="1" stop-color="#ecbfa2"/></linearGradient>
<linearGradient id="larmg" gradientUnits="userSpaceOnUse" x1="540" y1="0" x2="700" y2="0"><stop offset="0" stop-color="#f3cdb2"/><stop offset=".45" stop-color="#eec3a6"/><stop offset=".75" stop-color="#e6b698"/><stop offset="1" stop-color="#efc4a8"/></linearGradient>
<linearGradient id="hairg" x1="0" y1="0" x2="0" y2="1"><stop offset="0" stop-color="#dc9787"/><stop offset=".35" stop-color="#e4a191"/><stop offset="1" stop-color="#e8a897"/></linearGradient>
<linearGradient id="faceg" x1="0" y1="0" x2="1" y2="1"><stop offset="0" stop-color="#f7dccd"/><stop offset="1" stop-color="#efcab5"/></linearGradient>
<linearGradient id="skirtu" x1="0" y1="0" x2="0" y2="1"><stop offset="0" stop-color="#a77ec6"/><stop offset="1" stop-color="#a27ac2"/></linearGradient>
<linearGradient id="skirtl" x1="0" y1="0" x2="0" y2="1"><stop offset="0" stop-color="#8f66b0"/><stop offset=".15" stop-color="#a077c0"/><stop offset="1" stop-color="#a47bc4"/></linearGradient>
<linearGradient id="bodg" x1="0" y1="0" x2="1" y2="0"><stop offset="0" stop-color="#9c72bc"/><stop offset=".2" stop-color="#a87fc7"/><stop offset=".8" stop-color="#a77ec6"/><stop offset="1" stop-color="#966cb6"/></linearGradient>
<radialGradient id="neckshadow" cx=".5" cy=".3" r=".6"><stop offset="0" stop-color="#dcab90" stop-opacity=".3"/><stop offset="1" stop-color="#d9a58a" stop-opacity="0"/></radialGradient>
</defs>
<rect x="516" y="192" width="512" height="768" fill="url(#bgg)"/>
<path d="M665.0,878.0 C665.0,878.0 669.7,911.3 672.0,925.0 C674.3,938.7 679.0,960.0 679.0,960.0 C679.0,960.0 747.5,960.0 747.5,960.0 C747.5,960.0 747.8,938.0 748.0,925.0 C748.2,912.0 748.5,882.0 748.5,882.0 C748.5,882.0 665.0,878.0 665.0,878.0 Z" fill="url(#legg)" />
<path d="M794.0,885.0 C794.0,885.0 799.5,912.5 802.0,925.0 C804.5,937.5 809.0,960.0 809.0,960.0 C809.0,960.0 882.0,960.0 882.0,960.0 C882.0,960.0 881.4,937.5 881.0,925.0 C880.6,912.5 879.5,885.0 879.5,885.0 C879.5,885.0 794.0,885.0 794.0,885.0 Z" fill="url(#legg)" />
<path d="M872.0,419.0 C875.1,410.9 875.9,417.5 880.6,418.0 C885.3,418.5 894.2,419.6 900.0,422.2 C905.8,424.8 911.4,428.2 915.3,433.3 C919.2,438.4 921.5,444.5 923.6,452.8 C925.7,461.1 926.9,471.3 927.8,483.3 C928.7,495.3 928.7,511.1 929.2,525.0 C929.7,538.9 929.5,555.1 930.6,566.7 C931.8,578.3 933.8,585.1 936.1,594.4 C938.4,603.6 941.6,612.9 944.4,622.2 C947.2,631.5 950.0,640.7 952.8,650.0 C955.6,659.3 959.2,670.0 961.1,677.8 C963.0,685.6 962.9,691.7 964.4,696.7 C965.9,701.7 966.3,703.2 970.0,707.8 C973.7,712.4 982.1,719.8 986.7,724.4 C991.3,729.0 995.8,731.9 997.8,735.6 C999.8,739.3 999.3,741.2 998.9,746.7 C998.5,752.2 998.6,763.4 995.6,768.9 C992.6,774.4 986.3,777.2 981.1,780.0 C975.9,782.8 968.1,785.3 964.4,785.6 C960.7,785.9 959.0,782.0 959.0,782.0 C959.0,782.0 959.8,778.0 962.0,776.0 C964.2,774.0 968.3,772.8 972.0,770.0 C975.7,767.2 984.0,759.0 984.0,759.0 C984.0,759.0 978.3,748.2 976.0,745.0 C973.7,741.8 970.0,740.0 970.0,740.0 C970.0,740.0 973.2,748.2 974.0,752.0 C974.8,755.8 975.5,760.2 975.0,763.0 C974.5,765.8 972.4,768.8 971.0,769.0 C969.6,769.2 968.5,767.2 966.7,764.4 C964.9,761.6 962.2,755.9 960.0,752.2 C957.8,748.5 955.5,745.9 953.3,742.2 C951.1,738.5 948.4,735.0 946.7,730.0 C945.0,725.0 945.3,717.8 943.0,712.0 C940.7,706.2 936.5,703.0 933.0,695.0 C929.5,687.0 926.3,673.7 922.2,663.9 C918.1,654.1 912.2,645.4 908.3,636.1 C904.4,626.8 901.8,619.9 898.6,608.3 C895.4,596.7 891.5,578.3 888.9,566.7 C886.3,555.1 884.7,547.2 883.3,538.9 C881.9,530.6 880.8,524.6 880.6,516.7 C880.4,508.8 883.6,497.8 882.0,491.7 C880.4,485.6 874.1,484.2 870.8,480.0 C867.5,475.8 862.0,466.7 862.0,466.7 C862.0,466.7 868.9,427.1 872.0,419.0 Z" fill="url(#rarmg)" />
<path d="M702.0,412.0 C702.0,412.0 712.8,400.5 720.0,396.0 C727.2,391.5 745.0,385.0 745.0,385.0 C745.0,385.0 765.0,386.0 765.0,386.0 C765.0,386.0 809.6,340.0 809.6,340.0 C809.6,340.0 816.6,371.0 820.0,381.0 C823.4,391.0 823.3,396.2 830.0,400.0 C836.7,403.8 850.8,402.3 860.0,404.0 C869.2,405.7 879.7,404.0 885.0,410.0 C890.3,416.0 893.2,428.3 892.0,440.0 C890.8,451.7 881.7,466.7 878.0,480.0 C874.3,493.3 870.0,520.0 870.0,520.0 C870.0,520.0 760.0,520.0 760.0,520.0 C760.0,520.0 690.0,520.0 690.0,520.0 C690.0,520.0 683.0,483.3 680.0,470.0 C677.0,456.7 668.3,449.7 672.0,440.0 C675.7,430.3 702.0,412.0 702.0,412.0 Z" fill="#f1c8ad" />
<ellipse cx="785" cy="395" rx="38" ry="26" fill="url(#neckshadow)"/>
<path d="M712.0,412.0 C708.8,409.8 698.7,415.3 693.0,417.0 C687.3,418.7 682.4,419.2 678.0,422.0 C673.6,424.8 669.3,426.6 666.7,434.0 C664.1,441.4 663.1,453.9 662.2,466.7 C661.3,479.5 661.3,496.9 661.5,511.0 C661.7,525.0 664.5,541.4 663.5,551.0 C662.5,560.6 655.6,568.9 655.6,568.9 C655.6,568.9 645.4,565.8 640.0,563.0 C634.6,560.2 628.2,555.2 623.0,552.0 C617.8,548.8 613.3,548.2 609.0,544.0 C604.7,539.8 600.7,532.2 597.0,527.0 C593.3,521.8 592.0,516.5 587.0,513.0 C582.0,509.5 573.2,508.0 567.0,506.0 C560.8,504.0 554.5,502.1 550.0,501.0 C545.5,499.9 542.2,499.3 540.0,499.5 C537.8,499.7 536.7,500.8 536.5,502.0 C536.3,503.2 539.0,506.5 539.0,506.5 C539.0,506.5 547.0,509.0 547.0,509.0 C547.0,509.0 540.9,508.9 539.0,509.5 C537.1,510.1 535.8,511.2 535.5,512.5 C535.2,513.8 537.5,517.0 537.5,517.0 C537.5,517.0 546.0,520.0 546.0,520.0 C546.0,520.0 540.0,520.7 538.0,521.5 C536.0,522.3 534.3,523.8 534.0,525.0 C533.7,526.2 536.0,529.0 536.0,529.0 C536.0,529.0 545.0,532.0 545.0,532.0 C545.0,532.0 539.0,533.5 537.0,534.5 C535.0,535.5 533.2,536.8 533.0,538.0 C532.8,539.2 533.2,540.5 536.0,541.5 C538.8,542.5 544.4,541.3 549.6,543.7 C554.8,546.1 560.8,552.5 567.0,556.0 C573.2,559.5 582.0,562.2 586.7,564.4 C591.5,566.6 591.6,565.6 595.5,569.0 C599.4,572.4 605.3,579.6 610.0,585.0 C614.7,590.4 617.9,595.7 623.7,601.5 C629.5,607.3 637.6,614.8 645.0,620.0 C652.4,625.2 661.7,630.8 668.0,633.0 C674.3,635.2 678.3,636.3 683.0,633.0 C687.7,629.7 696.0,613.0 696.0,613.0 C696.0,613.0 693.3,591.3 692.0,578.0 C690.7,564.7 688.9,547.1 688.0,533.0 C687.1,518.9 684.9,505.1 686.7,493.3 C688.5,481.5 698.9,462.2 698.9,462.2 C698.9,462.2 709.8,438.4 712.0,430.0 C714.2,421.6 715.2,414.2 712.0,412.0 Z" fill="url(#larmg)" />
<path d="M547.0,509.0 C550.0,509.8 559.8,512.2 565.0,514.0 C570.2,515.8 575.8,519.0 578.0,520.0" fill="none" stroke="#d9a58a" stroke-width="0.8" opacity=".7"/>
<path d="M546.0,520.0 C548.7,520.8 559.3,524.2 562.0,525.0" fill="none" stroke="#d9a58a" stroke-width="0.8" opacity=".7"/>
<path d="M545.0,532.0 C547.5,532.7 557.5,535.3 560.0,536.0" fill="none" stroke="#d9a58a" stroke-width="0.8" opacity=".7"/>
<path d="M570.0,522.0 C571.3,523.3 576.3,527.0 578.0,530.0 C579.7,533.0 579.7,538.3 580.0,540.0" fill="none" stroke="#dcaa8e" stroke-width="1" opacity=".6"/>
<path d="M761.0,208.5 C751.5,209.4 745.6,211.1 737.3,215.8 C729.0,220.5 718.2,228.0 711.2,236.7 C704.3,245.4 699.1,256.8 695.6,268.0 C692.1,279.2 691.5,293.4 690.5,303.7 C689.5,314.0 688.8,320.1 689.5,329.6 C690.2,339.1 694.2,351.2 694.5,360.7 C694.8,370.2 690.1,376.7 691.0,386.6 C691.9,396.5 698.8,410.4 700.0,420.3 C701.2,430.2 698.6,439.3 698.1,446.2 C697.6,453.1 697.0,461.7 697.0,461.7 C697.0,461.7 707.9,455.7 713.7,448.8 C719.5,441.9 727.0,429.8 731.8,420.3 C736.5,410.8 739.2,398.0 742.2,391.8 C745.2,385.6 750.0,383.0 750.0,383.0 C750.0,383.0 780.1,367.2 790.0,360.0 C799.9,352.8 809.6,340.0 809.6,340.0 C809.6,340.0 815.7,368.8 820.0,381.0 C824.3,393.2 835.5,413.0 835.5,413.0 C835.5,413.0 852.0,414.2 860.0,415.0 C868.0,415.8 883.4,417.7 883.4,417.7 C883.4,417.7 884.1,409.6 882.5,405.0 C880.9,400.4 875.2,395.5 873.5,390.0 C871.8,384.5 872.5,378.7 872.0,372.0 C871.5,365.3 872.2,357.8 870.5,350.0 C868.8,342.2 865.1,333.3 862.0,325.0 C858.9,316.7 855.0,309.5 852.0,300.0 C849.0,290.5 847.0,278.0 844.0,268.0 C841.0,258.0 837.9,246.9 834.0,240.0 C830.1,233.1 827.2,231.2 820.6,226.3 C814.0,221.4 804.5,213.6 794.6,210.6 C784.7,207.6 770.5,207.6 761.0,208.5 Z" fill="url(#hairg)" />
<path d="M790.0,222.0 C793.3,220.3 808.0,235.3 815.0,245.0 C822.0,254.7 827.0,265.8 832.0,280.0 C837.0,294.2 840.7,314.2 845.0,330.0 C849.3,345.8 853.5,362.0 858.0,375.0 C862.5,388.0 872.0,408.0 872.0,408.0 C872.0,408.0 860.0,414.7 855.0,410.0 C850.0,405.3 846.5,392.5 842.0,380.0 C837.5,367.5 833.0,350.0 828.0,335.0 C823.0,320.0 817.5,303.3 812.0,290.0 C806.5,276.7 798.7,266.3 795.0,255.0 C791.3,243.7 786.7,223.7 790.0,222.0 Z" fill="#d48a7b" opacity=".3"/>
<path d="M700.0,330.0 C702.7,335.0 709.0,365.0 712.0,380.0 C715.0,395.0 718.7,408.0 718.0,420.0 C717.3,432.0 708.0,452.0 708.0,452.0 C708.0,452.0 703.7,440.3 702.0,430.0 C700.3,419.7 699.0,403.3 698.0,390.0 C697.0,376.7 695.7,360.0 696.0,350.0 C696.3,340.0 697.3,325.0 700.0,330.0 Z" fill="#d38a7b" opacity=".35"/>
<path d="M775.0,214.0 C777.5,212.7 792.5,215.0 800.0,218.0 C807.5,221.0 819.2,229.0 820.0,232.0 C820.8,235.0 810.8,237.0 805.0,236.0 C799.2,235.0 790.0,229.7 785.0,226.0 C780.0,222.3 772.5,215.3 775.0,214.0 Z" fill="#f0b3a4" opacity=".35"/>
<path d="M770.0,213.0 C769.5,215.0 759.3,221.7 755.0,228.0 C750.7,234.3 744.0,251.0 744.0,251.0 C744.0,251.0 731.8,259.2 732.0,256.0 C732.2,252.8 740.7,238.7 745.0,232.0 C749.3,225.3 753.8,219.2 758.0,216.0 C762.2,212.8 770.5,211.0 770.0,213.0 Z" fill="#c27a6c" opacity=".35"/>
<path d="M736.0,218.0 C731.5,220.3 723.2,228.7 718.0,236.0 C712.8,243.3 705.8,257.3 705.0,262.0 C704.2,266.7 709.5,267.7 713.0,264.0 C716.5,260.3 720.7,247.0 726.0,240.0 C731.3,233.0 743.3,225.7 745.0,222.0 C746.7,218.3 740.5,215.7 736.0,218.0 Z" fill="#d88f80" opacity=".3"/>
<path d="M705.0,260.0 C701.3,267.5 698.8,286.7 698.0,300.0 C697.2,313.3 698.7,335.8 700.0,340.0 C701.3,344.2 704.0,333.3 706.0,325.0 C708.0,316.7 709.7,301.7 712.0,290.0 C714.3,278.3 721.2,260.0 720.0,255.0 C718.8,250.0 708.7,252.5 705.0,260.0 Z" fill="#f0b3a3" opacity=".35"/>
<path d="M845.0,300.0 C848.0,305.0 854.5,326.7 858.0,340.0 C861.5,353.3 863.7,370.0 866.0,380.0 C868.3,390.0 872.0,400.0 872.0,400.0 C872.0,400.0 865.3,403.3 862.0,395.0 C858.7,386.7 855.7,364.2 852.0,350.0 C848.3,335.8 841.2,318.3 840.0,310.0 C838.8,301.7 842.0,295.0 845.0,300.0 Z" fill="#f0b3a3" opacity=".3"/>
<path d="M708.0,308.8 C707.5,301.4 709.3,296.5 710.5,290.0 C711.7,283.5 712.4,275.5 715.0,270.0 C717.6,264.5 721.5,260.1 726.0,257.0 C730.5,253.9 742.0,251.5 742.0,251.5 C742.0,251.5 751.3,262.1 756.0,267.0 C760.7,271.9 765.4,276.5 770.0,281.0 C774.6,285.5 778.7,289.2 783.7,294.0 C788.7,298.8 795.7,306.0 800.0,310.0 C804.3,314.0 807.1,316.0 809.6,318.0 C812.1,320.0 814.7,319.0 814.7,321.8 C814.7,324.6 811.8,329.1 809.6,334.7 C807.5,340.3 806.1,348.6 801.8,355.5 C797.5,362.4 789.8,371.0 783.7,376.2 C777.7,381.4 770.7,384.9 765.5,386.6 C760.3,388.3 757.8,388.3 752.6,386.6 C747.4,384.9 739.6,381.4 734.4,376.2 C729.2,371.0 725.0,362.4 721.5,355.5 C718.0,348.6 716.0,342.5 713.7,334.7 C711.5,326.9 708.5,316.2 708.0,308.8 Z" fill="url(#faceg)" />
<path d="M809.0,316.0 C810.2,313.2 813.7,312.0 815.0,313.0 C816.3,314.0 817.5,318.7 817.0,322.0 C816.5,325.3 813.5,331.7 812.0,333.0 C810.5,334.3 808.5,332.8 808.0,330.0 C807.5,327.2 807.8,318.8 809.0,316.0 Z" fill="#efc2ac" />
<path d="M709.0,296.0 C710.8,295.6 716.2,293.8 720.0,293.5 C723.8,293.2 730.0,293.9 732.0,294.0" fill="none" stroke="#b98070" stroke-width="1.6" opacity=".8"/>
<path d="M743.0,290.0 C745.3,289.8 752.3,288.3 757.0,288.5 C761.7,288.7 768.7,290.6 771.0,291.0" fill="none" stroke="#b98070" stroke-width="1.6" opacity=".8"/>
<path d="M709.0,311.5 C709.0,311.5 713.5,308.8 716.0,308.5 C718.5,308.2 722.2,309.4 724.0,310.0 C725.8,310.6 727.0,312.0 727.0,312.0 C727.0,312.0 720.5,313.3 718.0,313.5 C715.5,313.7 713.5,313.3 712.0,313.0 C710.5,312.7 709.0,311.5 709.0,311.5 Z" fill="#5a423a" />
<path d="M748.0,309.0 C748.0,309.0 752.3,306.4 755.0,306.0 C757.7,305.6 761.8,306.2 764.0,306.5 C766.2,306.8 768.0,308.0 768.0,308.0 C768.0,308.0 762.7,310.1 760.0,310.5 C757.3,310.9 754.0,310.8 752.0,310.5 C750.0,310.2 748.0,309.0 748.0,309.0 Z" fill="#5a423a" />
<circle cx="717.5" cy="311" r="2.2" fill="#2e211d"/><circle cx="757" cy="308" r="2.2" fill="#2e211d"/>
<path d="M735.0,322.0 C734.7,324.2 733.7,331.5 733.0,335.0 C732.3,338.5 730.3,341.3 731.0,343.0 C731.7,344.7 736.0,344.7 737.0,345.0" fill="none" stroke="#dcab95" stroke-width="1.2" opacity=".7"/>
<path d="M729.0,356.5 C730.0,355.2 735.3,354.2 738.0,354.0 C740.7,353.8 742.0,354.5 745.0,355.0 C748.0,355.5 756.0,357.0 756.0,357.0 C756.0,357.0 751.0,362.5 748.0,364.0 C745.0,365.5 740.7,366.3 738.0,366.0 C735.3,365.7 733.5,363.6 732.0,362.0 C730.5,360.4 728.0,357.8 729.0,356.5 Z" fill="#e49a8c" />
<path d="M730.0,358.5 C732.0,358.6 737.8,359.2 742.0,359.0 C746.2,358.8 752.8,357.8 755.0,357.5" fill="none" stroke="#c77a6e" stroke-width="0.8" opacity=".7"/>
<path d="M629.5,752.0 C629.5,752.0 674.9,761.7 700.0,765.0 C725.1,768.3 753.3,770.5 780.0,772.0 C806.7,773.5 839.0,774.7 860.0,774.0 C881.0,773.3 906.0,768.0 906.0,768.0 C906.0,768.0 909.3,776.7 911.0,782.0 C912.7,787.3 914.2,793.7 916.0,800.0 C917.8,806.3 920.0,811.7 922.0,820.0 C924.0,828.3 925.3,840.0 928.0,850.0 C930.7,860.0 938.2,880.3 938.2,880.3 C938.2,880.3 921.4,888.4 912.5,890.2 C903.6,892.0 894.2,890.3 885.0,891.0 C875.8,891.7 866.2,893.2 857.0,894.2 C847.8,895.2 838.2,896.2 830.0,897.0 C821.8,897.8 816.3,898.9 807.6,899.1 C798.9,899.3 788.3,898.6 777.9,898.1 C767.5,897.6 753.9,896.6 745.0,896.0 C736.1,895.4 732.2,895.5 724.5,894.2 C716.8,892.9 711.2,890.4 698.7,888.2 C686.2,886.1 663.1,883.9 649.3,881.3 C635.4,878.7 626.0,876.8 615.6,872.4 C605.2,868.0 586.9,854.6 586.9,854.6 C586.9,854.6 595.3,830.8 600.0,820.0 C604.7,809.2 610.1,801.3 615.0,790.0 C619.9,778.7 629.5,752.0 629.5,752.0 Z" fill="url(#skirtl)" />
<clipPath id="clipl"><path d="M629.5,752.0 C629.5,752.0 674.9,761.7 700.0,765.0 C725.1,768.3 753.3,770.5 780.0,772.0 C806.7,773.5 839.0,774.7 860.0,774.0 C881.0,773.3 906.0,768.0 906.0,768.0 C906.0,768.0 909.3,776.7 911.0,782.0 C912.7,787.3 914.2,793.7 916.0,800.0 C917.8,806.3 920.0,811.7 922.0,820.0 C924.0,828.3 925.3,840.0 928.0,850.0 C930.7,860.0 938.2,880.3 938.2,880.3 C938.2,880.3 921.4,888.4 912.5,890.2 C903.6,892.0 894.2,890.3 885.0,891.0 C875.8,891.7 866.2,893.2 857.0,894.2 C847.8,895.2 838.2,896.2 830.0,897.0 C821.8,897.8 816.3,898.9 807.6,899.1 C798.9,899.3 788.3,898.6 777.9,898.1 C767.5,897.6 753.9,896.6 745.0,896.0 C736.1,895.4 732.2,895.5 724.5,894.2 C716.8,892.9 711.2,890.4 698.7,888.2 C686.2,886.1 663.1,883.9 649.3,881.3 C635.4,878.7 626.0,876.8 615.6,872.4 C605.2,868.0 586.9,854.6 586.9,854.6 C586.9,854.6 595.3,830.8 600.0,820.0 C604.7,809.2 610.1,801.3 615.0,790.0 C619.9,778.7 629.5,752.0 629.5,752.0 Z"/></clipPath><g clip-path="url(#clipl)">
<path d="M640.0,765.0 C640.0,765.0 630.5,808.3 628.0,830.0 C625.5,851.7 625.0,895.0 625.0,895.0 C625.0,895.0 643.0,897.0 643.0,897.0 C643.0,897.0 641.4,851.5 642.4,830.0 C643.4,808.5 649.0,768.0 649.0,768.0 C649.0,768.0 640.0,765.0 640.0,765.0 Z" fill="#8a61aa" opacity=".25"/>
<path d="M712.0,765.0 C712.0,765.0 714.7,808.3 716.0,830.0 C717.3,851.7 720.0,895.0 720.0,895.0 C720.0,895.0 744.0,897.0 744.0,897.0 C744.0,897.0 738.5,851.5 735.2,830.0 C731.9,808.5 724.0,768.0 724.0,768.0 C724.0,768.0 712.0,765.0 712.0,765.0 Z" fill="#8a61aa" opacity=".25"/>
<path d="M805.0,765.0 C805.0,765.0 814.5,808.3 818.0,830.0 C821.5,851.7 826.0,895.0 826.0,895.0 C826.0,895.0 838.0,897.0 838.0,897.0 C838.0,897.0 832.1,851.5 827.6,830.0 C823.1,808.5 811.0,768.0 811.0,768.0 C811.0,768.0 805.0,765.0 805.0,765.0 Z" fill="#8a61aa" opacity=".25"/>
<path d="M868.0,765.0 C868.0,765.0 880.8,808.3 885.0,830.0 C889.2,851.7 893.0,895.0 893.0,895.0 C893.0,895.0 907.0,897.0 907.0,897.0 C907.0,897.0 901.5,851.5 896.2,830.0 C890.9,808.5 875.0,768.0 875.0,768.0 C875.0,768.0 868.0,765.0 868.0,765.0 Z" fill="#8a61aa" opacity=".25"/>
<path d="M612.7,753.0 C617.2,755.2 629.9,762.5 639.4,766.0 C648.9,769.5 660.1,771.6 670.0,774.0 C679.9,776.4 687.3,778.2 698.7,780.5 C710.1,782.8 728.9,786.1 738.3,787.5 C747.7,788.9 748.4,788.3 755.0,789.0 C761.6,789.7 770.8,790.9 777.9,791.5 C785.0,792.1 789.5,792.8 797.7,792.5 C806.0,792.2 818.7,790.2 827.4,789.5 C836.1,788.8 841.8,788.3 850.0,788.0 C858.2,787.7 869.1,788.2 876.9,787.5 C884.7,786.8 890.0,785.2 896.6,783.5 C903.2,781.8 913.1,778.5 916.4,777.5" fill="none" stroke="#6a4590" stroke-width="6" opacity=".3"/>
<rect x="580" y="750" width="60" height="150" fill="#7a529c" opacity=".12"/>
</g>
<path d="M696.7,611.0 C696.7,611.0 748.0,615.2 773.0,616.7 C798.0,618.2 846.7,620.0 846.7,620.0 C846.7,620.0 849.6,622.0 852.0,627.0 C854.4,632.0 857.3,641.5 861.1,650.0 C864.9,658.5 870.9,669.0 875.0,677.8 C879.1,686.6 881.8,692.6 886.0,703.0 C890.2,713.4 894.9,728.3 900.0,740.0 C905.1,751.7 916.4,773.4 916.4,773.4 C916.4,773.4 903.2,777.8 896.6,779.4 C890.0,781.0 884.7,782.5 876.9,783.3 C869.1,784.1 858.2,783.7 850.0,784.0 C841.8,784.3 836.1,784.6 827.4,785.3 C818.7,786.0 806.0,788.0 797.7,788.3 C789.5,788.6 785.0,787.8 777.9,787.3 C770.8,786.8 761.6,785.7 755.0,785.0 C748.4,784.3 747.7,784.7 738.3,783.3 C728.9,781.9 710.1,778.6 698.7,776.4 C687.3,774.2 679.9,772.3 670.0,770.0 C660.1,767.7 648.9,765.9 639.4,762.5 C629.9,759.1 612.7,749.7 612.7,749.7 C612.7,749.7 622.1,730.8 627.5,720.0 C632.9,709.2 638.2,697.5 645.0,685.0 C651.8,672.5 660.8,655.8 668.0,645.0 C675.2,634.2 683.2,625.7 688.0,620.0 C692.8,614.3 696.7,611.0 696.7,611.0 Z" fill="url(#skirtu)" />
<clipPath id="clipu"><path d="M696.7,611.0 C696.7,611.0 748.0,615.2 773.0,616.7 C798.0,618.2 846.7,620.0 846.7,620.0 C846.7,620.0 849.6,622.0 852.0,627.0 C854.4,632.0 857.3,641.5 861.1,650.0 C864.9,658.5 870.9,669.0 875.0,677.8 C879.1,686.6 881.8,692.6 886.0,703.0 C890.2,713.4 894.9,728.3 900.0,740.0 C905.1,751.7 916.4,773.4 916.4,773.4 C916.4,773.4 903.2,777.8 896.6,779.4 C890.0,781.0 884.7,782.5 876.9,783.3 C869.1,784.1 858.2,783.7 850.0,784.0 C841.8,784.3 836.1,784.6 827.4,785.3 C818.7,786.0 806.0,788.0 797.7,788.3 C789.5,788.6 785.0,787.8 777.9,787.3 C770.8,786.8 761.6,785.7 755.0,785.0 C748.4,784.3 747.7,784.7 738.3,783.3 C728.9,781.9 710.1,778.6 698.7,776.4 C687.3,774.2 679.9,772.3 670.0,770.0 C660.1,767.7 648.9,765.9 639.4,762.5 C629.9,759.1 612.7,749.7 612.7,749.7 C612.7,749.7 622.1,730.8 627.5,720.0 C632.9,709.2 638.2,697.5 645.0,685.0 C651.8,672.5 660.8,655.8 668.0,645.0 C675.2,634.2 683.2,625.7 688.0,620.0 C692.8,614.3 696.7,611.0 696.7,611.0 Z"/></clipPath><g clip-path="url(#clipu)">
<path d="M690.0,622.0 C690.0,622.0 669.0,673.7 660.0,700.0 C651.0,726.3 636.0,780.0 636.0,780.0 C636.0,780.0 648.0,782.0 648.0,782.0 C648.0,782.0 660.6,726.7 668.4,700.0 C676.2,673.3 694.8,622.0 694.8,622.0 C694.8,622.0 690.0,622.0 690.0,622.0 Z" fill="#8d63ad" opacity=".25"/>
<path d="M745.0,622.0 C745.0,622.0 742.8,673.7 742.0,700.0 C741.2,726.3 740.0,780.0 740.0,780.0 C740.0,780.0 750.0,782.0 750.0,782.0 C750.0,782.0 749.2,726.7 749.0,700.0 C748.8,673.3 749.0,622.0 749.0,622.0 C749.0,622.0 745.0,622.0 745.0,622.0 Z" fill="#8d63ad" opacity=".25"/>
<path d="M800.0,622.0 C800.0,622.0 808.0,673.7 812.0,700.0 C816.0,726.3 824.0,780.0 824.0,780.0 C824.0,780.0 834.0,782.0 834.0,782.0 C834.0,782.0 824.0,726.7 819.0,700.0 C814.0,673.3 804.0,622.0 804.0,622.0 C804.0,622.0 800.0,622.0 800.0,622.0 Z" fill="#8d63ad" opacity=".25"/>
<path d="M838.0,622.0 C838.0,622.0 856.7,673.7 865.0,700.0 C873.3,726.3 888.0,780.0 888.0,780.0 C888.0,780.0 898.0,782.0 898.0,782.0 C898.0,782.0 881.3,726.7 872.0,700.0 C862.7,673.3 842.0,622.0 842.0,622.0 C842.0,622.0 838.0,622.0 838.0,622.0 Z" fill="#8d63ad" opacity=".25"/>
</g>
<path d="M612.7,749.7 C617.2,751.8 629.9,759.1 639.4,762.5 C648.9,765.9 660.1,767.7 670.0,770.0 C679.9,772.3 687.3,774.2 698.7,776.4 C710.1,778.6 728.9,781.9 738.3,783.3 C747.7,784.7 748.4,784.3 755.0,785.0 C761.6,785.7 770.8,786.8 777.9,787.3 C785.0,787.8 789.5,788.6 797.7,788.3 C806.0,788.0 818.7,786.0 827.4,785.3 C836.1,784.6 841.8,784.3 850.0,784.0 C858.2,783.7 869.1,784.1 876.9,783.3 C884.7,782.5 890.0,781.0 896.6,779.4 C903.2,777.8 913.1,774.4 916.4,773.4" fill="none" stroke="#6f4a8a" stroke-width="1.1" />
<path d="M586.9,854.6 C591.7,857.6 605.2,868.0 615.6,872.4 C626.0,876.8 635.4,878.7 649.3,881.3 C663.1,883.9 686.2,886.1 698.7,888.2 C711.2,890.4 716.8,892.9 724.5,894.2 C732.2,895.5 736.1,895.4 745.0,896.0 C753.9,896.6 767.5,897.6 777.9,898.1 C788.3,898.6 798.9,899.3 807.6,899.1 C816.3,898.9 821.8,897.8 830.0,897.0 C838.2,896.2 847.8,895.2 857.0,894.2 C866.2,893.2 875.8,891.7 885.0,891.0 C894.2,890.3 903.6,892.0 912.5,890.2 C921.4,888.4 933.9,881.9 938.2,880.3" fill="none" stroke="#6f4a8a" stroke-width="1.1" />
<path d="M612.7,749.7 C615.2,744.8 622.1,730.8 627.5,720.0 C632.9,709.2 638.2,697.5 645.0,685.0 C651.8,672.5 660.8,655.8 668.0,645.0 C675.2,634.2 683.2,625.7 688.0,620.0 C692.8,614.3 695.2,612.5 696.7,611.0" fill="none" stroke="#7a5396" stroke-width="0.8" />
<path d="M916.4,773.4 C913.7,767.8 905.1,751.7 900.0,740.0 C894.9,728.3 890.2,713.4 886.0,703.0 C881.8,692.6 879.1,686.6 875.0,677.8 C870.9,669.0 864.9,658.5 861.1,650.0 C857.3,641.5 853.5,630.8 852.0,627.0" fill="none" stroke="#7a5396" stroke-width="0.8" />
<path d="M586.9,854.6 C589.1,848.8 595.3,830.8 600.0,820.0 C604.7,809.2 610.1,800.1 615.0,790.0 C619.9,779.9 627.1,764.7 629.5,759.6" fill="none" stroke="#7a5396" stroke-width="0.8" />
<path d="M938.2,880.3 C936.5,875.2 931.0,860.0 928.0,850.0 C925.0,840.0 922.2,828.3 920.0,820.0 C917.8,811.7 916.7,807.0 915.0,800.0 C913.3,793.0 910.8,781.7 910.0,778.0" fill="none" stroke="#7a5396" stroke-width="0.8" />
<path d="M698.9,462.2 C698.9,462.2 706.4,473.5 713.3,477.8 C720.1,482.1 730.0,485.8 740.0,487.8 C750.0,489.8 762.2,490.4 773.3,490.0 C784.4,489.6 795.6,488.0 806.7,485.6 C817.8,483.2 830.8,478.8 840.0,475.6 C849.2,472.5 862.2,466.7 862.2,466.7 C862.2,466.7 868.2,479.3 871.0,488.9 C873.8,498.5 878.9,524.4 878.9,524.4 C878.9,524.4 874.1,544.9 871.0,555.6 C867.9,566.4 864.0,578.2 860.0,588.9 C856.0,599.6 846.7,620.0 846.7,620.0 C846.7,620.0 798.3,618.2 773.3,616.7 C748.3,615.2 696.7,611.0 696.7,611.0 C696.7,611.0 693.7,590.8 692.2,577.8 C690.7,564.8 688.7,547.4 687.8,533.3 C686.9,519.2 684.9,505.1 686.7,493.3 C688.6,481.5 698.9,462.2 698.9,462.2 Z" fill="url(#bodg)" />
<path d="M698.9,462.2 C701.3,464.8 706.4,473.5 713.3,477.8 C720.1,482.1 730.0,485.8 740.0,487.8 C750.0,489.8 762.2,490.4 773.3,490.0 C784.4,489.6 795.6,488.0 806.7,485.6 C817.8,483.2 830.8,478.8 840.0,475.6 C849.2,472.5 858.5,468.2 862.2,466.7" fill="none" stroke="#5e3d76" stroke-width="1.4" />
<path d="M696.7,611.0 C709.5,612.0 748.3,615.2 773.3,616.7 C798.3,618.2 834.5,619.5 846.7,620.0" fill="none" stroke="#6a4585" stroke-width="1" />
<path d="M700.0,533.0 C701.2,539.2 705.2,557.0 707.0,570.0 C708.8,583.0 710.3,604.2 711.0,611.0" fill="none" stroke="#8c62ab" stroke-width="0.9" />
<path d="M840.0,531.0 C844.1,534.0 860.3,545.9 864.4,548.9" fill="none" stroke="#8c62ab" stroke-width="0.9" />
<path d="M831.0,551.0 C830.5,556.7 828.7,573.5 828.0,585.0 C827.3,596.5 826.9,614.2 826.7,620.0" fill="none" stroke="#8c62ab" stroke-width="0.9" />
<path d="M878.9,524.4 C877.6,529.6 874.1,544.9 871.0,555.6 C867.9,566.4 864.0,578.2 860.0,588.9 C856.0,599.6 848.9,614.8 846.7,620.0" fill="none" stroke="#6f4a8a" stroke-width="0.8" />
<path d="M862,467 L880,418" stroke="#9a6cc0" stroke-width="2.4" fill="none"/>
<path d="M862,467 L880,418" stroke="#6d4a88" stroke-width=".6" fill="none"/>

</svg>

<!-- STATUS TEXT -->
<div class="a" style="left:89px;top:1062px;width:183px;height:16px;background:#545454"></div>
<div class="t" style="left:53px;top:1065px;font-size:12px;color:#dcdcdc;transform:scaleX(.92)">50%</div>
<div class="t" style="left:110px;top:1065px;font-size:12px;color:#dcdcdc;transform:scaleX(.9)">1024 px x 1536 px (72 ppi)</div>
<svg class="ico" style="left:262px;top:1064px" width="7" height="12" viewBox="0 0 7 12"><path d="M1.5,1.5 L5.5,6 L1.5,10.5" fill="none" stroke="#c8c8c8" stroke-width="1.1"/></svg>
<div class="a" style="left:787px;top:1078px;width:33px;height:2px;background:#8c8a3a"></div>

<!-- BLEND MODE DROPDOWN -->
<div class="a" style="left:1566px;top:522px;width:152px;height:552px;background:linear-gradient(90deg,rgba(0,0,0,0) 0,rgba(0,0,0,0) 140px,rgba(30,40,50,.35) 146px,rgba(0,0,0,0) 152px)"></div>
<div class="a" style="left:1562px;top:524px;width:5px;height:546px;background:#4a575c"></div>
<div class="a" style="left:1567px;top:522px;width:146px;height:549px;background:#1f4a70"></div>
<div class="a" style="left:1567px;top:524px;width:143px;height:545px;background:#ffffff;overflow:hidden">
<div class="ddi" style="top:0px">Normal</div>
<div class="ddi" style="top:17px">Dissolve</div>
<div class="a" style="left:0;top:42.5px;width:143px;height:1px;background:#a8a8a8"></div>
<div class="ddi" style="top:51px">Darken</div>
<div class="a" style="left:0;top:68px;width:143px;height:16.5px;background:#0b75d5;outline:1px dotted #9fcff5;outline-offset:-1px"></div>
<div class="ddi" style="top:68px;color:#d6f0ff">Multiply</div>
<div class="ddi" style="top:85px">Color Burn</div>
<div class="ddi" style="top:102px">Linear Burn</div>
<div class="ddi" style="top:119px">Darker Color</div>
<div class="a" style="left:0;top:144.5px;width:143px;height:1px;background:#a8a8a8"></div>
<div class="ddi" style="top:153px">Lighten</div>
<div class="ddi" style="top:170px">Screen</div>
<div class="ddi" style="top:187px">Color Dodge</div>
<div class="ddi" style="top:204px">Linear Dodge (Add)</div>
<div class="ddi" style="top:221px">Lighter Color</div>
<div class="a" style="left:0;top:246.5px;width:143px;height:1px;background:#a8a8a8"></div>
<div class="ddi" style="top:255px">Overlay</div>
<div class="ddi" style="top:272px">Soft Light</div>
<div class="ddi" style="top:289px">Hard Light</div>
<div class="ddi" style="top:306px">Vivid Light</div>
<div class="ddi" style="top:323px">Linear Light</div>
<div class="ddi" style="top:340px">Pin Light</div>
<div class="ddi" style="top:357px">Hard Mix</div>
<div class="a" style="left:0;top:382.5px;width:143px;height:1px;background:#a8a8a8"></div>
<div class="ddi" style="top:391px">Difference</div>
<div class="ddi" style="top:408px">Exclusion</div>
<div class="ddi" style="top:425px">Subtract</div>
<div class="ddi" style="top:442px">Divide</div>
<div class="a" style="left:0;top:467.5px;width:143px;height:1px;background:#a8a8a8"></div>
<div class="ddi" style="top:476px">Hue</div>
<div class="ddi" style="top:493px">Saturation</div>
<div class="ddi" style="top:510px">Color</div>
<div class="ddi" style="top:527px">Luminosity</div>
</div>

<!-- RED ARROW -->
<svg class="a" style="left:0;top:0;pointer-events:none" width="1920" height="1080" viewBox="0 0 1920 1080">
<path d="M1852.6,382.9 L1684.5,595" stroke="#f20d0d" stroke-width="5" stroke-linecap="round" fill="none"/>
<path d="M1690.3,549 L1684.5,595 L1728.6,579" stroke="#f20d0d" stroke-width="4.8" stroke-linecap="round" stroke-linejoin="miter" fill="none"/>
</svg>
</body></html>
